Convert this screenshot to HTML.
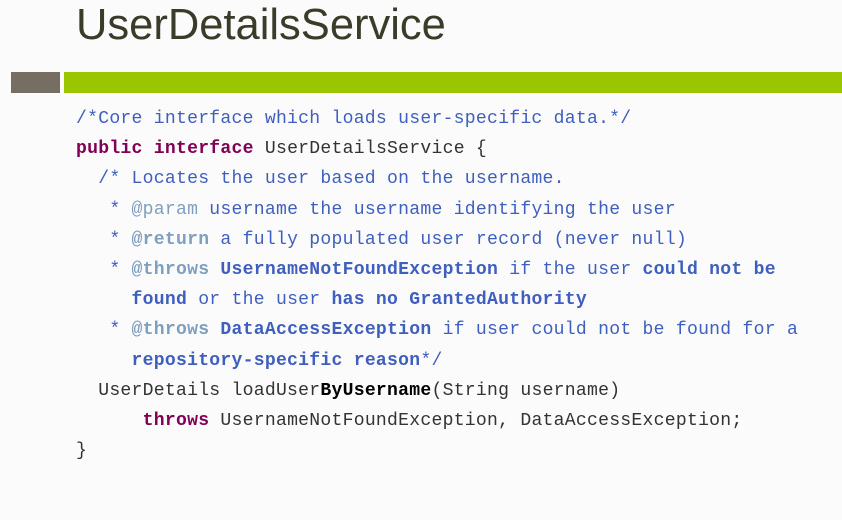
<!DOCTYPE html>
<html><head><style>
body{margin:0;width:842px;height:520px;background:#fbfbfb;position:relative;overflow:hidden}
.t{position:absolute;left:76px;top:-3px;font-family:"Liberation Sans",sans-serif;font-size:43.5px;color:#3b3b2a;line-height:56px}
.g{position:absolute;left:11px;top:72px;width:49px;height:21px;background:#776e63}
.gr{position:absolute;left:64px;top:72px;width:778px;height:21px;background:#99c600}
pre{position:absolute;left:76px;top:104px;margin:0;font-family:"Liberation Mono",monospace;font-size:18.1px;letter-spacing:0.25px;line-height:30.2px;color:#333}
.c{color:#3f5fbf}.k{color:#7f0055;font-weight:bold}.a{color:#7f9fbf}.ab{color:#7f9fbf;font-weight:bold}.b{color:#3f5fbf;font-weight:bold}
</style></head><body>
<div class="t">UserDetailsService</div>
<div class="g"></div><div class="gr"></div>
<pre><span class="c">/*Core interface which loads user-specific data.*/</span>
<span class="k">public</span> <span class="k">interface</span> UserDetailsService {
<span class="c">  /* Locates the user based on the username.
   * <span class="a">@param</span> username the username identifying the user
   * <span class="ab">@return</span> a fully populated user record (never null)
   * <span class="ab">@throws</span> <span class="b">UsernameNotFoundException</span> if the user <span class="b">could not be</span>
     <span class="b">found</span> or the user <span class="b">has no GrantedAuthority</span>
   * <span class="ab">@throws</span> <span class="b">DataAccessException</span> if user could not be found for a
     <span class="b">repository-specific reason</span>*/</span>
  UserDetails loadUser<b style="color:#000">ByUsername</b>(String username)
      <span class="k">throws</span> UsernameNotFoundException, DataAccessException;
}</pre>
</body></html>
